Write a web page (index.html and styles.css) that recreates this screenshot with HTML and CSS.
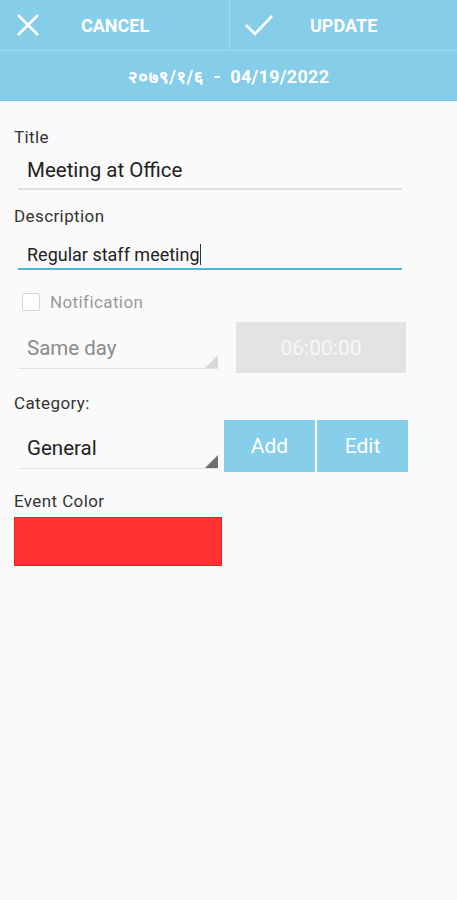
FILE: index.html
```html
<!DOCTYPE html>
<html lang="en">
<head>
  <meta charset="UTF-8">
  <meta name="viewport" content="width=device-width, initial-scale=1.0">
  <title>Edit Event</title>
  <link rel="stylesheet" href="styles.css">
</head>
<body>
  <div class="header">
    <div class="actions">
      <div class="action action-cancel">
        <svg class="action-icon" width="24" height="24" viewBox="0 0 24 24">
          <path d="M2 2 L22 22 M22 2 L2 22" stroke="#fff" stroke-width="2.6" fill="none"/>
        </svg>
        <span>CANCEL</span>
      </div>
      <div class="action action-update">
        <svg class="action-icon" width="30" height="22" viewBox="0 0 30 22">
          <path d="M2 11 L11 20 L28 2" stroke="#fff" stroke-width="2.6" fill="none"/>
        </svg>
        <span>UPDATE</span>
      </div>
    </div>
    <div class="date-bar">२०७९/१/६&nbsp; - &nbsp;04/19/2022</div>
  </div>

  <div class="form">
    <label class="field-label">Title</label>
    <div class="text-input">Meeting at Office</div>

    <label class="field-label">Description</label>
    <div class="text-input text-input-active">Regular staff meeting<span class="caret"></span></div>

    <div class="check-row">
      <span class="checkbox"></span>
      <span class="check-text">Notification</span>
    </div>

    <div class="row">
      <div class="spinner spinner-disabled">Same day<span class="corner"></span></div>
      <div class="time-btn">06:00:00</div>
    </div>

    <label class="field-label label-category">Category:</label>
    <div class="row row-category">
      <div class="spinner">General<span class="corner"></span></div>
      <div class="btn-group">
        <div class="blue-btn">Add</div>
        <div class="blue-btn">Edit</div>
      </div>
    </div>

    <label class="field-label label-color">Event Color</label>
    <div class="color-box"></div>
  </div>
</body>
</html>
```
FILE: styles.css
```css
body {
  margin: 0;
  padding: 0;
  font-family: Roboto, "Noto Sans", "DejaVu Sans", sans-serif;
  background-color: #fafafa;
  color: #222;
}
.header {
  background-color: #86cdea;
  color: white;
  border-bottom: 1px solid #7cc3e0;
}
.actions {
  display: flex;
  height: 50px;
  border-bottom: 1px solid #a3d9ee;
}
.action {
  flex: 1;
  display: flex;
  align-items: center;
  font-weight: bold;
  font-size: 18px;
}
.action-cancel {
  border-right: 1px solid #a3d9ee;
  padding-left: 16px;
}
.action-cancel span {
  margin-left: 41px;
}
.action-update {
  padding-left: 14px;
}
.action-update span {
  margin-left: 36px;
}
.date-bar {
  height: 49px;
  display: flex;
  align-items: center;
  justify-content: center;
  font-weight: bold;
  font-size: 18px;
  letter-spacing: 0.3px;
  white-space: pre;
}
.form {
  padding: 26px 14px 0;
}
.field-label {
  display: block;
  font-size: 17px;
  letter-spacing: 0.4px;
  color: #333;
  line-height: 20px;
}
.text-input {
  margin: 9px 41px 16px 4px;
  padding: 0 9px 4px;
  font-size: 20.5px;
  line-height: 28px;
  border-bottom: 2px solid #e0e0e0;
}
.text-input-active {
  font-size: 18px;
  line-height: 24px;
  margin-top: 17px;
  margin-bottom: 20px;
  padding-bottom: 1px;
  border-bottom: 2px solid #4fb3dc;
}
.caret {
  display: inline-block;
  width: 1px;
  height: 21px;
  background: #333;
  vertical-align: -4px;
}
.check-row {
  display: flex;
  align-items: center;
  margin-left: 8px;
  height: 24px;
}
.checkbox {
  width: 16px;
  height: 16px;
  border: 1px solid #d6d6d6;
  border-radius: 2px;
  background: #fff;
}
.check-text {
  margin-left: 10px;
  font-size: 17px;
  letter-spacing: 0.4px;
  color: #9a9a9a;
}
.row {
  display: flex;
  align-items: flex-start;
  margin-top: 8px;
}
.spinner {
  position: relative;
  width: 191px;
  margin-left: 4px;
  margin-top: 12px;
  padding: 0 0 6px 9px;
  font-size: 20.5px;
  line-height: 28px;
  border-bottom: 1px solid #e2e2e2;
}
.spinner-disabled {
  color: #8a8a8a;
}
.corner {
  position: absolute;
  right: 0;
  bottom: 0;
  width: 0;
  height: 0;
  border-left: 13px solid transparent;
  border-bottom: 13px solid #d8d8d8;
}
.row-category .spinner {
  margin-top: 14px;
}
.row-category .corner {
  border-bottom-color: #6f6f6f;
}
.time-btn {
  margin-left: 18px;
  width: 170px;
  height: 51px;
  display: flex;
  align-items: center;
  justify-content: center;
  background: #e3e3e3;
  color: #f7f7f7;
  font-size: 21px;
}
.label-category {
  margin-top: 20px;
}
.row-category {
  margin-top: 7px;
}
.btn-group {
  display: flex;
  gap: 2px;
  margin-left: 6px;
}
.blue-btn {
  width: 91px;
  height: 52px;
  display: flex;
  align-items: center;
  justify-content: center;
  background: #87ceea;
  color: white;
  font-size: 21px;
}
.label-color {
  margin-top: 19px;
}
.color-box {
  margin-top: 6px;
  width: 206px;
  height: 47px;
  background: #ff3333;
  border: 1px solid #e82020;
}
```
